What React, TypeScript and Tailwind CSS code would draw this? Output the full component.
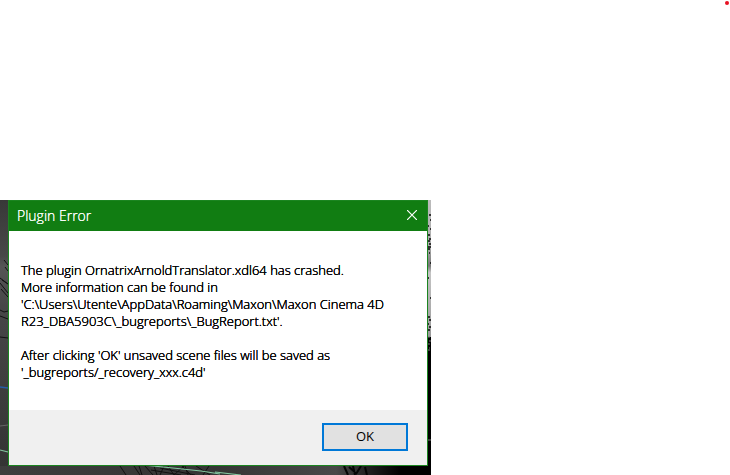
import React from 'react';

const hairStrands = [
  'M4 60l4 5M5 67l3 4M0 78l8 6M0 83l8 10M1 89l7 8M2 80l6 4M0 110l4 2 4-1M0 116l8 3M0 137l8 1',
  'M120 266l6 9M134 266l6 9M139 266l3 9M145 266l8 9M154 266l3 9M160 275l4-9M168 266l6 9M174 275l10-9M182 266l9 9M188 275l-3-9M196 266l14 9M203 275l6-9M151 270l30 5M160 268l35 7',
];

const speckles =
  'M429 15h2M430 20h1M428 26h1M430 29h1M428 35h2M429 39h2M428 41h2M429 44h2M428 47h3M428 49h2M429 53h1M430 63h1M428 78h1M430 98h1M428 117h2M429 120h2M428 124h1M429 127h2M428 130h2';

function ViewportBackdrop() {
  return (
    <svg className="absolute inset-0 h-full w-full" viewBox="0 0 431 275" preserveAspectRatio="none" aria-hidden="true">
      <defs>
        <linearGradient id="left" x1="0" y1="0" x2="0" y2="1">
          <stop offset="0" stopColor="#383838" />
          <stop offset="0.21" stopColor="#484848" />
          <stop offset="0.25" stopColor="#555" />
          <stop offset="0.4" stopColor="#474747" />
          <stop offset="1" stopColor="#343434" />
        </linearGradient>
        <linearGradient id="right" x1="0" y1="0" x2="0" y2="1">
          <stop offset="0" stopColor="#bcbcbc" />
          <stop offset="0.35" stopColor="#aaa" />
          <stop offset="0.48" stopColor="#777" />
          <stop offset="0.53" stopColor="#c4c4c4" />
          <stop offset="1" stopColor="#999" />
        </linearGradient>
        <linearGradient id="bottom" x1="0" y1="0" x2="1" y2="0">
          <stop offset="0" stopColor="#3d3d3d" />
          <stop offset="0.5" stopColor="#353535" />
          <stop offset="0.78" stopColor="#484848" />
          <stop offset="0.85" stopColor="#222" />
          <stop offset="0.93" stopColor="#000" />
        </linearGradient>
      </defs>
      <path fill="#000" d="M0 0h431v275H0z" />
      <path fill="url(#left)" d="M0 0h9v266H0z" />
      <path fill="url(#right)" d="M427 0h4v137h-4z" />
      <path fill="url(#bottom)" d="M0 66h431v9H0z" transform="translate(0 200)" />
      {hairStrands.map((d) => (
        <path key={d} d={d} fill="none" stroke="#111" strokeWidth="1" />
      ))}
      <path d={speckles} stroke="#080808" strokeWidth="1.4" />
      <path d="M428 137h2M429 141h2M428 144h2M429 148h1M428 150h2M428 240h3" stroke="#777" strokeWidth="1" />
      <path d="M0 187l8 1" stroke="#245fa8" strokeWidth="1.4" />
      <path d="M0 226l8-1" stroke="#666" strokeWidth="1" />
      <path d="M0 250l8 2M143 265l30 3 28 3 19 3M215 272l26 3" fill="none" stroke="#83c7a0" strokeWidth="1.2" />
      <path d="M344 266l4 9M349 267l8 7M353 266l2 9M361 266l-5 8M365 267l2 8" stroke="#050505" strokeWidth="2" />
    </svg>
  );
}

function ErrorDialog() {
  return (
    <div
      role="alertdialog"
      aria-labelledby="dialog-title"
      aria-describedby="dialog-message"
      className="relative border border-[#1b8520] bg-white"
    >
      <div className="flex h-[30px] items-center justify-between bg-[#117d12] pl-2 text-white">
        <h1 id="dialog-title" className="text-[14px] leading-5 font-light [text-shadow:0_0_0_#fff]">Plugin Error</h1>
        <button type="button" aria-label="Close" className="flex h-7 w-[30px] items-center justify-center self-start">
          <svg width="10" height="10" viewBox="0 0 10 10" fill="none" stroke="white" strokeWidth="1.2">
            <path d="M0 0l10 10M10 0L0 10" />
          </svg>
        </button>
      </div>
      <div
        id="dialog-message"
        className="px-3 pt-[31px] pb-[29px] text-[13px] leading-[17px] font-light text-black [text-shadow:0_0_0_#000,0_0_0_#000]"
      >
        <p>
          The plugin OrnatrixArnoldTranslator.xdl64 has crashed.<br />
          More information can be found in<br />
          'C:\Users\Utente\AppData\Roaming\Maxon\Maxon Cinema 4D<br />
          R23_DBA5903C\_bugreports\_BugReport.txt'.
        </p>
        <p className="mt-[17px]">
          After clicking 'OK' unsaved scene files will be saved as<br />
          '_bugreports/_recovery_xxx.c4d'
        </p>
      </div>
      <div className="flex justify-end bg-[#f0f0f0] pt-[13px] pr-[19px] pb-[14px]">
        <button type="button" className="h-7 w-[86px] border-2 border-[#0078d7] bg-[#e1e1e1] text-[13px] text-black">
          OK
        </button>
      </div>
    </div>
  );
}

export default function App() {
  return (
    <main className="min-h-screen bg-white font-['Open_Sans','Noto_Sans',sans-serif]">
      <header className="flex h-[200px] justify-end p-px">
        <span className="size-1 rounded-full bg-[#e81123]" />
      </header>
      <section className="relative w-full max-w-[431px] pr-[3px] pb-[9px] pl-2">
        <ViewportBackdrop />
        <ErrorDialog />
      </section>
    </main>
  );
}
